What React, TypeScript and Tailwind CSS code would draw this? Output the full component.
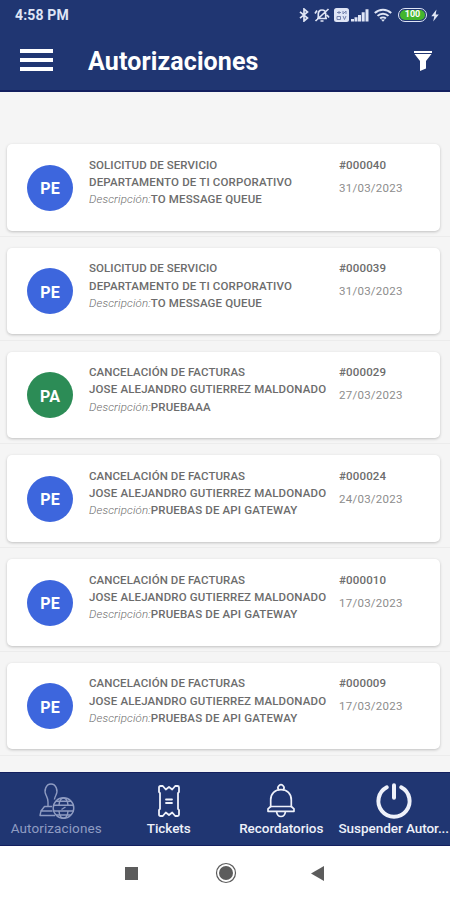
import { useState } from 'react'

const STATUS_COLOR = {
  PE: 'bg-[#3d66dd]',
  PA: 'bg-[#2c8c56]',
} as const

type Status = keyof typeof STATUS_COLOR

interface Authorization {
  id: string
  status: Status
  title: string
  owner: string
  description: string
  date: string
}

const AUTHORIZATIONS: Authorization[] = [
  { id: '000040', status: 'PE', title: 'SOLICITUD DE SERVICIO', owner: 'DEPARTAMENTO DE TI CORPORATIVO', description: 'TO MESSAGE QUEUE', date: '31/03/2023' },
  { id: '000039', status: 'PE', title: 'SOLICITUD DE SERVICIO', owner: 'DEPARTAMENTO DE TI CORPORATIVO', description: 'TO MESSAGE QUEUE', date: '31/03/2023' },
  { id: '000029', status: 'PA', title: 'CANCELACIÓN DE FACTURAS', owner: 'JOSE ALEJANDRO GUTIERREZ MALDONADO', description: 'PRUEBAAA', date: '27/03/2023' },
  { id: '000024', status: 'PE', title: 'CANCELACIÓN DE FACTURAS', owner: 'JOSE ALEJANDRO GUTIERREZ MALDONADO', description: 'PRUEBAS DE API GATEWAY', date: '24/03/2023' },
  { id: '000010', status: 'PE', title: 'CANCELACIÓN DE FACTURAS', owner: 'JOSE ALEJANDRO GUTIERREZ MALDONADO', description: 'PRUEBAS DE API GATEWAY', date: '17/03/2023' },
  { id: '000009', status: 'PE', title: 'CANCELACIÓN DE FACTURAS', owner: 'JOSE ALEJANDRO GUTIERREZ MALDONADO', description: 'PRUEBAS DE API GATEWAY', date: '17/03/2023' },
]

const TABS = [
  { label: 'Autorizaciones', Icon: StampIcon },
  { label: 'Tickets', Icon: TicketIcon },
  { label: 'Recordatorios', Icon: BellIcon },
  { label: 'Suspender Autor...', Icon: PowerIcon },
]

function StampIcon() {
  return (
    <svg className="ml-0.5" width="36" height="38" viewBox="0 0 36 38" fill="none" stroke="currentColor" strokeWidth="1.4" strokeLinejoin="round">
      <path d="M9 24.500V20c0-3-.8-4.500-1.800-6.500C4.500 8.500 7 2 12 2s7.500 6.500 4.800 11.500c-.8 1.500-1.200 2.500-1.400 4" />
      <path d="M13 24.500H5.500L2 29H13.500M2 29l-1 4.500H16" />
      <circle cx="24.500" cy="26" r="10.300" />
      <path d="M14 23.200h20.800M14 29h20.800M20 23c.5-4 2.300-7 4.500-7s4 3 4.500 7M20 29.300c.5 4 2.300 7 4.500 7s4-3 4.500-7M17 19.300h15M17 33h15" />
      <path d="M22.500 27.500l4-2.500" />
    </svg>
  )
}

function TicketIcon() {
  return (
    <svg width="24" height="38" viewBox="0 0 24 38" fill="none" stroke="currentColor" strokeWidth="1.800" strokeLinejoin="round" strokeLinecap="round">
      <path d="M3.500 4h2.300l3 3.500L12 5l3.200 2.500 3-3.500h2.300q1.500 0 1.500 1.500V10l-1 1.200v15.600l1 1.200v4.500q0 1.500-1.500 1.500h-2.300l-3-3.500L12 33l-3.200-2.500-3 3.500H3.500Q2 34 2 32.500V28l1-1.200V11.200L2 10V5.500Q2 4 3.500 4z" />
      <path d="M9 17.500h6M9 21h6" />
    </svg>
  )
}

function BellIcon() {
  return (
    <svg width="32" height="38" viewBox="0 0 32 38" fill="none" stroke="currentColor" strokeWidth="1.700" strokeLinejoin="round" strokeLinecap="round">
      <path d="M13.500 7.500a3 3 0 1 1 5 0" />
      <path d="M5.700 24.500V18C5.700 11.500 10 7.700 16 7.700S26.300 11.500 26.300 18v6.500" />
      <path d="M5.700 24.500H26.300l2.700 2.300v2.500H3v-2.500zM11.500 29.500c.4 3 2 5 4.500 5s4.100-2 4.500-5" />
    </svg>
  )
}

function PowerIcon() {
  return (
    <svg width="38" height="38" viewBox="0 0 38 38" fill="none" stroke="currentColor" strokeWidth="4" strokeLinecap="round">
      <path d="M11.800 5.300a15.600 15.600 0 1 0 14.400 0" />
      <path d="M19 3.300v12.500" />
    </svg>
  )
}

function StatusBar() {
  return (
    <div className="flex h-[30px] items-center justify-between pl-[15px] pr-[11px] text-[#dfe5f5]">
      <span className="text-sm font-bold tracking-[0.150px]">4:58 PM</span>
      <div className="flex items-center">
        <svg width="10" height="14" viewBox="0 0 10 14" fill="none" stroke="currentColor" strokeWidth="1.700">
          <path d="M1 3.800l7.500 6.200L5 13V1l3.500 3L1 10.200" />
        </svg>
        <svg className="ml-[5px]" width="16" height="14" viewBox="0 0 16 14" fill="none" stroke="currentColor" strokeWidth="1.700">
          <path d="M3 10.500h10M4.300 10V6c0-2.500 1.500-4 3.700-4s3.700 1.500 3.700 4v4M6.500 13h3M1.500 13L14.500 1M1 5.500l2-3M13 7l2 2.500" />
        </svg>
        <svg className="ml-1" width="15" height="14" viewBox="0 0 15 14">
          <rect width="15" height="14" rx="2.500" fill="currentColor" />
          <path d="M3 4.500h4M5 3v3M9 3v3l3-3v3M3 8.500h3.500v3H3zM9 8l1.500 3.500L12 8" fill="none" stroke="#7482ad" strokeWidth="1" />
        </svg>
        <svg className="ml-0.5" width="18" height="14" viewBox="0 0 18 14" fill="currentColor">
          <path d="M0 11h3v2.500H0zM3.500 9.300h3v4.200h-3zM7 7h3v6.500H7zM10.700 4.300h3v9.200h-3zM14.500 1.300h3v12.200h-3z" />
        </svg>
        <svg className="ml-[5px]" width="18" height="14" viewBox="0 0 18 14" fill="none" stroke="currentColor" strokeWidth="2">
          <path d="M.8 5c4.600-4.400 11.800-4.400 16.400 0M3.500 7.900c3.100-3 7.900-3 11 0M6.100 10.600c1.600-1.500 4.200-1.500 5.800 0" />
          <path d="M7 11.500L9 13.800l2-2.300z" fill="currentColor" stroke="none" />
        </svg>
        <div className="ml-1.5 flex h-[14px] w-[29px] items-center justify-center rounded-full border-[1.500px] border-[#dfe5f5] p-px">
          <span className="flex h-full w-full items-center justify-center rounded-full bg-[#43b52e] text-[9px] font-bold text-white">100</span>
        </div>
        <svg className="ml-1" width="8" height="13" viewBox="0 0 8 13" fill="currentColor">
          <path d="M5.500.5L.3 7.300h3L2.200 12.500 7.800 5.400H4.700z" />
        </svg>
      </div>
    </div>
  )
}

function AuthorizationRow({ item }: { item: Authorization }) {
  return (
    <div className="h-[103.800px] border-b border-[#ececec] pl-[7px] pr-2.5 pt-[11px]">
      <div className="flex h-[86.500px] rounded-[5px] bg-white pl-5 shadow-[0_1px_3px_rgba(0,0,0,0.220)]">
        <div className={`mt-[20.500px] flex size-[46px] shrink-0 items-center justify-center rounded-full pt-[3px] text-base font-bold text-white ${STATUS_COLOR[item.status]}`}>
          {item.status}
        </div>
        <div className="ml-4 mt-[12.500px] w-[250px] shrink-0 whitespace-nowrap text-[11.500px] font-medium leading-[17.300px] tracking-[0.150px] text-[#6c6c6c]">
          <p className="tracking-[0.080px]">{item.title}</p>
          <p>{item.owner}</p>
          <p>
            <span className="font-light italic">Descripción:</span>
            {item.description}
          </p>
        </div>
        <div className="mt-[12.500px] text-[11.500px] leading-[17px]">
          <p className="font-medium tracking-[0.150px] text-[#6c6c6c]">#{item.id}</p>
          <p className="mt-1.5 tracking-[0.250px] text-[#8d8d8d]">{item.date}</p>
        </div>
      </div>
    </div>
  )
}

export default function App() {
  const [activeTab, setActiveTab] = useState('Autorizaciones')

  return (
    <div className="flex h-[900px] w-[450px] flex-col overflow-hidden bg-[#f5f5f5] font-['Roboto',sans-serif]">
      {/* ── Header ── */}
      <header className="h-[92px] shrink-0 border-b-2 border-[#13205f] bg-[#203672] text-white">
        <StatusBar />
        <div className="flex h-[61px] items-center pl-5 pr-[18px]">
          <button aria-label="Menu" className="-mt-px flex w-[33px] flex-col gap-[5px]">
            <span className="h-[4px] w-full bg-white" />
            <span className="h-[4px] w-full bg-white" />
            <span className="h-[4px] w-full bg-white" />
          </button>
          <h1 className="ml-[35px] pt-0.5 text-[25px] font-bold tracking-[0.120px]">Autorizaciones</h1>
          <button aria-label="Filter" className="ml-auto">
            <svg width="18" height="20" viewBox="0 0 18 20" fill="currentColor">
              <path d="M0 0h18v2H0zM.5 3h17L12 10v7.500L6 20V10z" />
            </svg>
          </button>
        </div>
      </header>

      {/* ── List ── */}
      <main className="min-h-0 flex-1 overflow-hidden pt-[41px]">
        {AUTHORIZATIONS.map((item) => (
          <AuthorizationRow key={item.id} item={item} />
        ))}
      </main>

      {/* ── Tabs ── */}
      <nav className="grid h-[74px] shrink-0 grid-cols-4 border-y border-[#13205f] bg-[#203672]">
        {TABS.map(({ label, Icon }) => (
          <button
            key={label}
            onClick={() => setActiveTab(label)}
            className={`flex min-w-0 flex-col items-center pt-[9px] ${activeTab === label ? 'text-[#8f9cc2]' : 'text-[#eef1fa]'}`}
          >
            <Icon />
            <span className={`whitespace-nowrap text-[13.500px] leading-[17px] ${activeTab === label ? 'tracking-[0.100px]' : 'font-medium tracking-[-0.050px]'}`}>{label}</span>
          </button>
        ))}
      </nav>

      {/* ── System navigation ── */}
      <div className="flex h-[54px] shrink-0 items-center bg-white pl-[125px] text-[#5c5c5c]">
        <span className="size-[13px] bg-[#5c5c5c]" />
        <svg className="ml-[77px]" width="22" height="22" viewBox="0 0 22 22">
          <circle cx="11" cy="11" r="9.500" fill="none" stroke="currentColor" strokeWidth="1.200" />
          <circle cx="11" cy="11" r="7" fill="currentColor" />
        </svg>
        <svg className="ml-[74px]" width="13" height="15" viewBox="0 0 13 15" fill="currentColor">
          <path d="M13 0v15L0 7.500z" />
        </svg>
      </div>
    </div>
  )
}
